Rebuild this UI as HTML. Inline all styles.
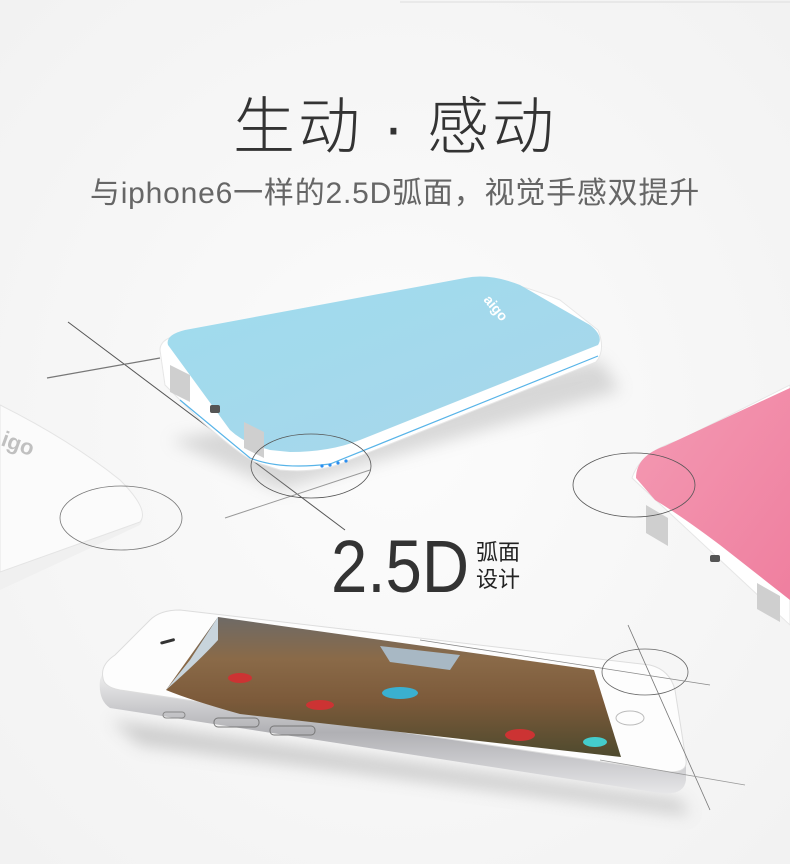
<!DOCTYPE html>
<html><head><meta charset="utf-8"><style>
html,body{margin:0;padding:0;background:#fafafa;}
body{width:790px;height:864px;position:relative;overflow:hidden;font-family:"Liberation Sans","Noto Sans CJK SC",sans-serif;}
.t1{position:absolute;top:76px;left:0;width:790px;text-align:center;font-size:62px;color:#333;font-weight:300;letter-spacing:3px;}
.t2{position:absolute;top:168px;left:0;width:790px;text-align:center;font-size:30px;color:#666;letter-spacing:0.8px;}
</style></head><body>
<svg width="790" height="864" style="position:absolute;left:0;top:0">
<defs>
<radialGradient id="bg" cx="50%" cy="50%" r="70%"><stop offset="0" stop-color="#fcfcfc"/><stop offset="1" stop-color="#f2f2f2"/></radialGradient>
<linearGradient id="blue" x1="0" y1="0" x2="1" y2="1"><stop offset="0" stop-color="#9fdcee"/><stop offset="1" stop-color="#a8d6ea"/></linearGradient>
<linearGradient id="pink" x1="0" y1="0" x2="1" y2="1"><stop offset="0" stop-color="#f49ab3"/><stop offset="1" stop-color="#ef7f9f"/></linearGradient>
<linearGradient id="game" x1="0" y1="0" x2="0" y2="1"><stop offset="0" stop-color="#6e6a66"/><stop offset="0.3" stop-color="#8a6a48"/><stop offset="0.6" stop-color="#7c5a3a"/><stop offset="1" stop-color="#4e4a2e"/></linearGradient>
<linearGradient id="silver" x1="0" y1="0" x2="0" y2="1"><stop offset="0" stop-color="#f0f0f0"/><stop offset="0.5" stop-color="#b0b0b4"/><stop offset="1" stop-color="#e6e6e8"/></linearGradient>
<filter id="sh" x="-20%" y="-20%" width="140%" height="160%"><feGaussianBlur stdDeviation="8"/></filter>
</defs>
<rect width="790" height="864" fill="url(#bg)"/>
<line x1="400" y1="2" x2="790" y2="2" stroke="#ddd"/>
<path d="M0 405 Q70 440 120 480 Q150 510 140 525 L0 590 Z" fill="#f0f0f0"/>
<path d="M0 405 Q70 440 120 480 Q150 510 140 522 L0 572 Z" fill="#fbfbfb" stroke="#e4e4e4"/>
<text x="0" y="445" font-size="22" fill="#c0c0c0" font-weight="bold" transform="rotate(20 0 445)">igo</text>
<ellipse cx="121" cy="518" rx="61" ry="32" fill="none" stroke="#777" stroke-width="0.8"/>
<line x1="68" y1="322" x2="345" y2="530" stroke="#555" stroke-width="1"/>
<line x1="47" y1="378" x2="160" y2="358" stroke="#777" stroke-width="1.2"/>
<line x1="225" y1="518" x2="370" y2="470" stroke="#999" stroke-width="1"/>
<path d="M170 440 L600 360 L620 390 L280 490 Z" fill="#999" opacity="0.35" filter="url(#sh)"/>
<path d="M160 350 Q160 340 175 336 L470 280 Q500 276 560 300 L598 330 Q606 350 596 362 L350 460 Q320 474 280 470 L255 462 Q240 455 200 420 L165 385 Z" fill="#fff" stroke="#e6e6e6"/>
<path d="M180 400 L250 458 Q280 470 330 464 L598 356" fill="none" stroke="#58b4e8" stroke-width="1.2"/>
<path d="M168 345 Q165 335 185 330 L465 278 Q490 273 520 285 L590 325 Q604 336 598 345 L360 440 Q330 452 290 452 L270 450 Q245 444 230 430 Z" fill="url(#blue)"/>
<text x="483" y="300" font-size="14" fill="#fff" font-weight="bold" transform="rotate(50 483 300)">aigo</text>
<path d="M170 365 L190 375 L190 402 L170 392 Z" fill="#cfcfcf"/>
<path d="M244 422 L264 432 L264 458 L244 448 Z" fill="#cfcfcf"/>
<rect x="210" y="405" width="10" height="8" fill="#555" rx="2"/>
<circle cx="322" cy="466" r="1.6" fill="#2a8ef0"/><circle cx="330" cy="465" r="1.6" fill="#2a8ef0"/><circle cx="338" cy="463" r="1.6" fill="#2a8ef0"/><circle cx="346" cy="461" r="1.6" fill="#2a8ef0"/>
<ellipse cx="311" cy="466" rx="60" ry="32" fill="none" stroke="#555" stroke-width="0.8"/>
<path d="M632 478 Q640 452 680 440 L790 385 L790 625 Z" fill="#fff" stroke="#e6e6e6"/>
<path d="M636 478 Q636 456 665 446 L790 388 L790 600 L720 545 Q680 515 655 500 Z" fill="url(#pink)"/>
<path d="M646 505 L668 518 L668 546 L646 533 Z" fill="#cfcfcf"/>
<rect x="710" y="555" width="10" height="7" fill="#555" rx="2"/>
<path d="M757 583 L780 596 L780 622 L757 609 Z" fill="#cfcfcf"/>
<ellipse cx="634" cy="485" rx="61" ry="32" fill="none" stroke="#555" stroke-width="0.8"/>
<text x="331" y="592" font-size="74" fill="#333" font-family="Liberation Sans" textLength="138" lengthAdjust="spacingAndGlyphs">2.5D</text>
<text x="476" y="560" font-size="22" fill="#222" font-family="Noto Sans CJK SC">弧面</text>
<text x="476" y="587" font-size="22" fill="#222" font-family="Noto Sans CJK SC">设计</text>
<path d="M110 720 L680 800 L690 815 L140 745 Z" fill="#999" opacity="0.45" filter="url(#sh)"/>
<path d="M100 680 Q98 700 110 708 L660 793 Q684 796 686 780 L686 760 L103 672 Z" fill="url(#silver)"/>
<path d="M103 678 Q100 665 115 655 L150 620 Q160 610 180 610 L650 665 Q670 670 675 690 L686 760 Q688 772 670 772 L120 690 Q104 687 103 678 Z" fill="#fdfdfd" stroke="#ddd"/>
<path d="M218 617 L594 670 L621 757 L240 714 Q190 700 166 690 Z" fill="url(#game)"/>
<path d="M166 690 Q200 660 218 640 L218 617 L190 660 Z" fill="#c8d4dc"/>
<path d="M380 646 L460 655 L450 670 L390 662 Z" fill="#a8b8c4"/>
<ellipse cx="240" cy="678" rx="12" ry="5" fill="#c33"/><ellipse cx="320" cy="705" rx="14" ry="5" fill="#c33"/>
<ellipse cx="400" cy="693" rx="18" ry="6" fill="#3ab0d0"/><ellipse cx="520" cy="735" rx="15" ry="6" fill="#c33"/>
<ellipse cx="595" cy="742" rx="12" ry="5" fill="#4cc"/>
<rect x="160" y="640" width="15" height="3" rx="1.5" fill="#333" transform="rotate(-15 167 641)"/>
<ellipse cx="630" cy="718" rx="14" ry="7" fill="none" stroke="#bbb"/>
<rect x="163" y="712" width="22" height="6" rx="3" fill="none" stroke="#888"/>
<rect x="214" y="718" width="45" height="9" rx="4" fill="none" stroke="#777"/>
<rect x="270" y="726" width="45" height="9" rx="4" fill="none" stroke="#777"/>
<line x1="628" y1="625" x2="710" y2="810" stroke="#777" stroke-width="0.8"/>
<line x1="420" y1="640" x2="710" y2="685" stroke="#888" stroke-width="0.8"/>
<line x1="600" y1="760" x2="745" y2="785" stroke="#999" stroke-width="0.8"/>
<ellipse cx="645" cy="672" rx="43" ry="23" fill="none" stroke="#666" stroke-width="0.8"/>
</svg>
<div class="t1">生动 · 感动</div>
<div class="t2">与iphone6一样的2.5D弧面，视觉手感双提升</div>
</body></html>
